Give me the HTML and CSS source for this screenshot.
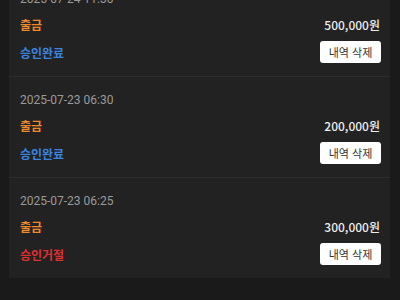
FILE: index.html
```html
<!DOCTYPE html>
<html lang="ko">
<head>
<meta charset="utf-8">
<link rel="stylesheet" href="styles.css">
</head>
<body>
<div class="list">
  <div class="item">
    <div class="date">2025-07-24 11:30</div>
    <div class="row type-row">
      <span class="type">출금</span>
      <span class="amount">500,000원</span>
    </div>
    <div class="row status-row">
      <span class="status done">승인완료</span>
      <button class="del">내역 삭제</button>
    </div>
  </div>
  <div class="item">
    <div class="date">2025-07-23 06:30</div>
    <div class="row type-row">
      <span class="type">출금</span>
      <span class="amount">200,000원</span>
    </div>
    <div class="row status-row">
      <span class="status done">승인완료</span>
      <button class="del">내역 삭제</button>
    </div>
  </div>
  <div class="item">
    <div class="date">2025-07-23 06:25</div>
    <div class="row type-row">
      <span class="type">출금</span>
      <span class="amount">300,000원</span>
    </div>
    <div class="row status-row">
      <span class="status rejected">승인거절</span>
      <button class="del">내역 삭제</button>
    </div>
  </div>
</div>
</body>
</html>
```
FILE: styles.css
```css
html, body {
  margin: 0;
  padding: 0;
  background: #1a1a1a;
  font-family: "Noto Sans CJK KR", "Noto Sans", sans-serif;
}
.list {
  margin: -24px 10px 0 9px;
  background: #222222;
}
.item {
  padding: 15px 9px 13px 11px;
  border-bottom: 1px solid #2d2d2d;
}
.item:last-child {
  border-bottom: none;
}
.date {
  font-family: "Roboto", "Noto Sans CJK KR", sans-serif;
  font-size: 12px;
  line-height: 16px;
  color: #9a9a9a;
}
.row {
  display: flex;
  justify-content: space-between;
  align-items: center;
}
.type-row {
  margin-top: 9px;
  height: 16px;
}
.status-row {
  margin-top: 9px;
  height: 22px;
}
.type {
  font-size: 12px;
  font-weight: 700;
  color: #ee8a2c;
}
.amount {
  font-size: 12px;
  font-weight: 500;
  color: #eeeeee;
  margin-right: 1px;
}
.status {
  font-size: 12px;
  font-weight: 700;
}
.status.done { color: #3a84e0; }
.status.rejected { color: #de3030; }
.del {
  font-family: "Noto Sans CJK KR", sans-serif;
  font-size: 11px;
  line-height: 14px;
  color: #333333;
  background: #ffffff;
  border: none;
  border-radius: 3px;
  height: 22px;
  width: 61px;
  padding: 0;
}
```
